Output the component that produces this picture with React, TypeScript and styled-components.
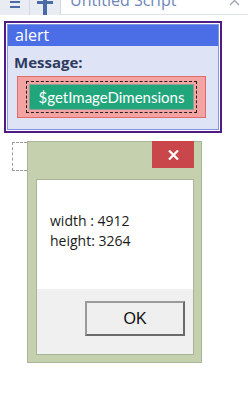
import React from "react";
import styled, { createGlobalStyle } from "styled-components";

const GlobalStyle = createGlobalStyle`
  html, body {
    margin: 0;
    padding: 0;
    background: #ffffff;
    font-family: "Open Sans", "Noto Sans", sans-serif;
  }
`;

const Page = styled.div`
  width: 248px;
  height: 407px;
  overflow: hidden;
  background: #ffffff;
`;

const TopBar = styled.div`
  display: flex;
  height: 15px;
  background: #e9edf3;
  overflow: hidden;
`;

const ToolCell = styled.div<{ $w: number }>`
  width: ${(p) => p.$w}px;
  flex: none;
  border-right: 1px solid #d3d9e2;
  display: flex;
  justify-content: center;
`;

const Tab = styled.div`
  flex: 1;
  display: flex;
  justify-content: space-between;
  background: #ffffff;
  border-bottom: 1px solid #dde3ec;
  padding: 0 8px 0 9px;
`;

const TabTitle = styled.span`
  font-size: 16px;
  line-height: 20px;
  margin-top: -10px;
  color: #6d86b8;
  white-space: nowrap;
`;

const AlertOuter = styled.div`
  margin: 6px 0 0 4px;
  width: 212px;
  border: 2px solid #4f1a84;
  padding: 1px;
  background: #ffffff;
`;

const AlertBlock = styled.div`
  border: 1px solid #8194e2;
  background: #dee3f6;
  height: 104px;
`;

const AlertHeader = styled.div`
  height: 21px;
  background: #4b6ee6;
  color: #ffffff;
  font-size: 16px;
  line-height: 20px;
  padding-left: 7px;
`;

const Label = styled.div`
  font-weight: 700;
  font-size: 15px;
  line-height: 20px;
  color: #2e3b5e;
  padding: 6px 0 0 6px;
`;

const ParamBox = styled.div`
  margin: 4px 0 0 9px;
  width: 189px;
  height: 42px;
  box-sizing: border-box;
  background: #f4a3a3;
  border: 1px solid #e26a6a;
  display: flex;
  align-items: center;
  justify-content: center;
`;

const Dashed = styled.div`
  border: 1px dashed #202020;
  padding: 2px;
`;

const ValueButton = styled.div`
  width: 163px;
  height: 24px;
  background: #21a67b;
  border: 1px solid #8aa297;
  color: #ffffff;
  font-family: Lato, "Open Sans", sans-serif;
  font-size: 15px;
  line-height: 24px;
  text-align: center;
  white-space: nowrap;
`;

const DialogRow = styled.div`
  display: flex;
  align-items: flex-start;
  margin-top: 8px;
  padding-left: 12px;
`;

const Ghost = styled.div`
  width: 14px;
  height: 27px;
  margin-top: 1px;
  border: 1px dashed #9a9a9a;
  border-right: none;
`;

const Dialog = styled.div`
  width: 173px;
  height: 220px;
  background: #c5d1ae;
  border: 1px solid #aab598;
  display: flex;
  flex-direction: column;
`;

const TitleBar = styled.div`
  height: 37px;
  display: flex;
  justify-content: flex-end;
  padding-right: 7px;
`;

const CloseButton = styled.div`
  width: 42px;
  height: 27px;
  background: #c9474b;
  display: flex;
  align-items: center;
  justify-content: center;
  margin-top: -1px;
`;

const Client = styled.div`
  margin: 0 7px 0 8px;
  border: 1px solid #a8b497;
  display: flex;
  flex-direction: column;
  height: 174px;
`;

const MessageArea = styled.div`
  height: 109px;
  background: #ffffff;
  padding: 31px 0 0 13px;
  box-sizing: border-box;
  font-size: 14px;
  line-height: 20px;
  color: #1a1a1a;
`;

const Footer = styled.div`
  flex: 1;
  background: #f0f0f0;
  display: flex;
  justify-content: flex-end;
  align-items: flex-start;
  padding: 12px 8px 0 0;
`;

const OkButton = styled.div`
  width: 96px;
  height: 31px;
  background: #efefef;
  border: 2px solid;
  border-color: #9a9a9a #6a6a6a #6a6a6a #9a9a9a;
  font-family: "Liberation Sans", Arial, sans-serif;
  font-size: 16px;
  line-height: 31px;
  text-align: center;
  color: #111111;
`;

export default function App() {
  return (
    <Page>
      <GlobalStyle />
      <TopBar>
        <ToolCell $w={29}>
          <svg width="10" height="15" viewBox="0 0 10 15">
            <rect x="0" y="1" width="10" height="2" fill="#4a6aa8" />
            <rect x="0" y="6" width="10" height="2" fill="#4a6aa8" />
          </svg>
        </ToolCell>
        <ToolCell $w={30}>
          <svg width="16" height="15" viewBox="0 0 16 15">
            <rect x="0" y="1" width="16" height="3" fill="#4a6aa8" />
            <rect x="6" y="0" width="4" height="15" fill="#4a6aa8" />
          </svg>
        </ToolCell>
        <Tab>
          <TabTitle>Untitled Script</TabTitle>
          <svg width="11" height="6" viewBox="0 0 11 6">
            <path d="M1 5 L5.5 0.5 L10 5" stroke="#9aa3b0" strokeWidth="1.3" fill="none" />
          </svg>
        </Tab>
      </TopBar>

      <AlertOuter>
        <AlertBlock>
          <AlertHeader>alert</AlertHeader>
          <Label>Message:</Label>
          <ParamBox>
            <Dashed>
              <ValueButton>$getImageDimensions</ValueButton>
            </Dashed>
          </ParamBox>
        </AlertBlock>
      </AlertOuter>

      <DialogRow>
        <Ghost />
        <Dialog>
          <TitleBar>
            <CloseButton>
              <svg width="11" height="10" viewBox="0 0 11 10">
                <path d="M1 0.5 L10 9.5 M10 0.5 L1 9.5" stroke="#ffffff" strokeWidth="2.2" />
              </svg>
            </CloseButton>
          </TitleBar>
          <Client>
            <MessageArea>
              width : 4912
              <br />
              height: 3264
            </MessageArea>
            <Footer>
              <OkButton>OK</OkButton>
            </Footer>
          </Client>
        </Dialog>
      </DialogRow>
    </Page>
  );
}
